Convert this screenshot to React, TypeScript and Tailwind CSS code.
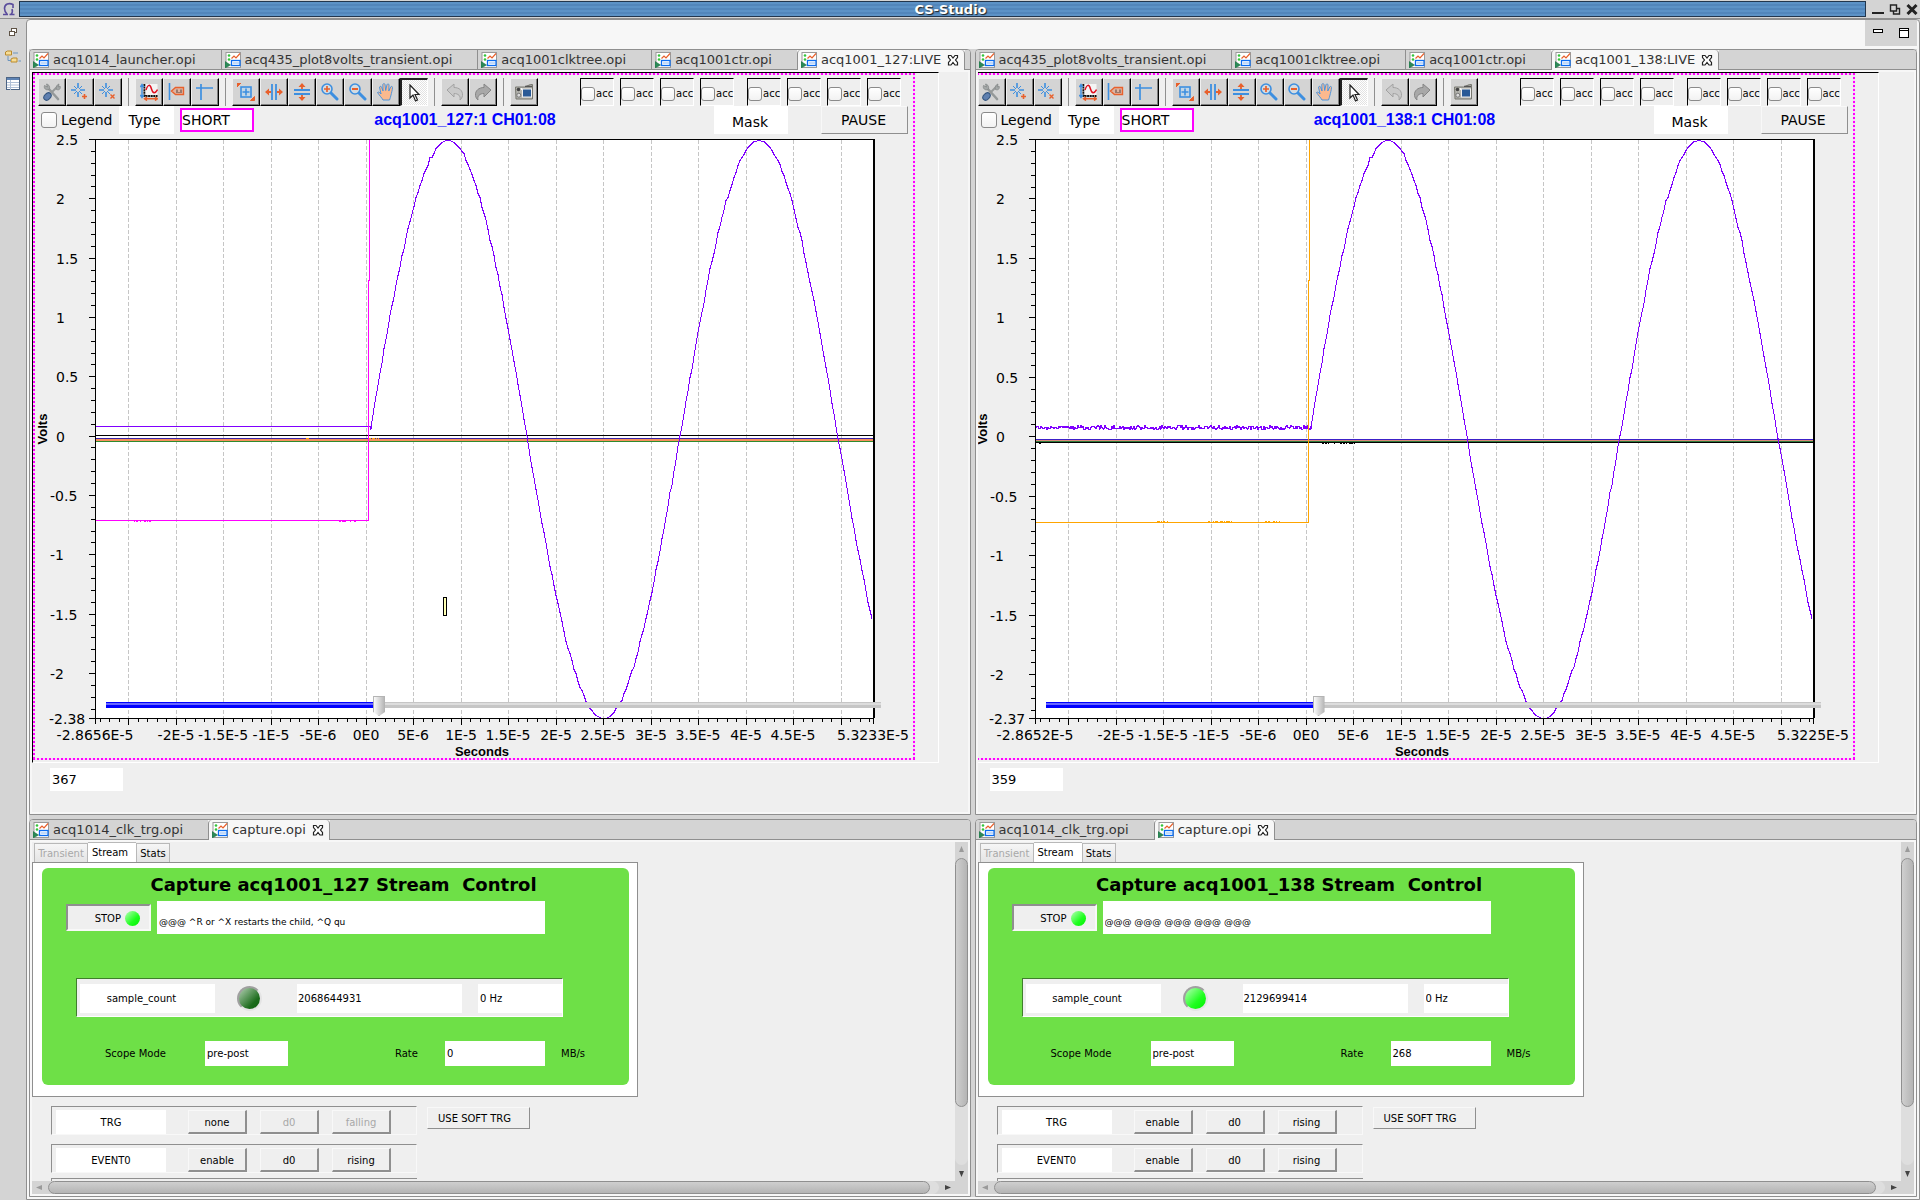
import React, { useState } from "react";

type Tab = { label: string; active?: boolean };

type Scope = {
  id: string;
  title: string;
  count: string;
  xMin: number;
  xMax: number;
  xMinLabel: string;
  xMaxLabel: string;
  yMin: number;
  stepColor: string;
  stepY: number;
  noisy: boolean;
};

type Trigger = { name: string; buttons: { label: string; off?: boolean }[] };

type Capture = {
  id: string;
  message: string;
  samples: string;
  running: boolean;
  rate: string;
  triggers: Trigger[];
};

const scopeLeft: Scope = {
  id: "acq1001_127",
  title: "acq1001_127:1 CH01:08",
  count: "367",
  xMin: -28.656,
  xMax: 53.233,
  xMinLabel: "-2.8656E-5",
  xMaxLabel: "5.3233E-5",
  yMin: -2.38,
  stepColor: "#ff00ff",
  stepY: 520,
  noisy: false,
};

const scopeRight: Scope = {
  id: "acq1001_138",
  title: "acq1001_138:1 CH01:08",
  count: "359",
  xMin: -28.652,
  xMax: 53.225,
  xMinLabel: "-2.8652E-5",
  xMaxLabel: "5.3225E-5",
  yMin: -2.37,
  stepColor: "#ffa500",
  stepY: 522,
  noisy: true,
};

const captureLeft: Capture = {
  id: "acq1001_127",
  message: "@@@ ^R or ^X restarts the child, ^Q qu",
  samples: "2068644931",
  running: false,
  rate: "0",
  triggers: [
    { name: "TRG", buttons: [{ label: "none" }, { label: "d0", off: true }, { label: "falling", off: true }] },
    { name: "EVENT0", buttons: [{ label: "enable" }, { label: "d0" }, { label: "rising" }] },
  ],
};

const captureRight: Capture = {
  id: "acq1001_138",
  message: "@@@ @@@ @@@ @@@ @@@",
  samples: "2129699414",
  running: true,
  rate: "268",
  triggers: [
    { name: "TRG", buttons: [{ label: "enable" }, { label: "d0" }, { label: "rising" }] },
    { name: "EVENT0", buttons: [{ label: "enable" }, { label: "d0" }, { label: "rising" }] },
  ],
};

/* ---------- icons ---------- */

const BLUE = "#3d8fe0";
const RED = "#e8602c";

const Star = () => (
  <g stroke={BLUE} fill="none">
    <path d="M7 0v5M7 9v5M0 7h5M9 7h5" strokeWidth="1.6" />
    <path d="M3 3l3 3M11 3L8 6M3 11l3-3M11 11L8 8" strokeWidth="1" />
  </g>
);

const Lens = () => (
  <>
    <path d="M9.5 9.5l6.5 6.5" stroke={BLUE} strokeWidth="3" strokeLinecap="round" />
    <circle cx="6" cy="6" r="5" fill="#d2dbe2" stroke={BLUE} strokeWidth="1.6" />
  </>
);

const icons: Record<string, React.ReactNode> = {
  settings: (
    <>
      <path d="M5 5l10 11" stroke="#959999" strokeWidth="2.6" strokeLinecap="round" />
      <path d="M1.5 2.5C.5 6 3.500 7.500 6 6.500 7.500 4 6 1.500 3.500 1L4.500 4z" fill="#a4a8a8" stroke="#858989" strokeWidth=".8" />
      <path d="M14 4L8 10" stroke="#959999" strokeWidth="2" />
      <path d="M17 3c1 3-1 4.500-3.500 3.500-1-2.500.5-5 2.500-5.500L15 4z" fill="#a4a8a8" stroke="#858989" strokeWidth=".8" />
      <ellipse cx="4.5" cy="13.5" rx="4.2" ry="3" transform="rotate(-45 4.5 13.5)" fill="#5f80b0" stroke="#34557f" />
    </>
  ),
  addMark: (
    <>
      <Star />
      <path d="M13.5 11v5M11 13.500h5" stroke={RED} strokeWidth="1.6" />
    </>
  ),
  delMark: (
    <>
      <Star />
      <path d="M11.5 11.500l4 4M15.500 11.500l-4 4" stroke={RED} strokeWidth="1.4" />
    </>
  ),
  autoscale: (
    <>
      <path d="M4.500 1v12h13" fill="none" stroke="#111" strokeWidth="2" strokeDasharray="2 .6" />
      <rect x="5.500" y="1" width="12" height="11" fill="#f4f4f4" />
      <path d="M6 7c2-6 4-6 5.500-1s3.500 5 6 .5" fill="none" stroke="#e01020" strokeWidth="1.5" />
      <path d="M2 2v12M.3 4L2 1.500 3.700 4M.3 12L2 14.500 3.700 12" fill="none" stroke={BLUE} strokeWidth="1.4" />
      <path d="M5 15.800h12M7 14l-2.500 1.800L7 17.600M15 14l2.500 1.800-2.500 1.800" fill="none" stroke={RED} strokeWidth="1.4" />
    </>
  ),
  annotate: (
    <>
      <path d="M1.500 0v17" stroke={BLUE} strokeWidth="1.6" />
      <path d="M3.500 8l4-3.500h8v7h-8z" fill="#dfb3a0" stroke={RED} strokeWidth="1.4" />
      <path d="M9 6.500v3.500M13 6.500v3.500M11 9v1" stroke="#6d5148" strokeWidth="1.2" />
    </>
  ),
  axis: <path d="M0 5h17M5 1v16" stroke={BLUE} strokeWidth="1.7" />,
  zoomArea: (
    <>
      <rect x="4" y="4" width="10" height="10" fill="#c3d6e6" stroke={BLUE} strokeWidth="1.6" />
      <path d="M9 5.500v7M5.500 9h7" stroke={BLUE} strokeWidth="1.6" />
      <path d="M0 0h4L0 4zM17.500 17.500h-4l4-4z" fill={RED} stroke={RED} />
    </>
  ),
  zoomX: (
    <>
      <path d="M7 1v16M11 1v16" stroke={BLUE} strokeWidth="1.8" />
      <path d="M6 9H2M12 9h4" stroke={RED} strokeWidth="1.8" />
      <path d="M4 5.500v7L0 9zM14 5.500v7L18 9z" fill={RED} />
    </>
  ),
  zoomY: (
    <>
      <path d="M1 7h16M1 11h16" stroke={BLUE} strokeWidth="1.8" />
      <path d="M9 6V2M9 12v4" stroke={RED} strokeWidth="1.8" />
      <path d="M5.500 4h7L9 0zM5.500 14h7L9 18z" fill={RED} />
    </>
  ),
  zoomIn: (
    <>
      <Lens />
      <path d="M6 3v6M3 6h6" stroke={RED} strokeWidth="1.7" />
    </>
  ),
  zoomOut: (
    <>
      <Lens />
      <path d="M3 6h6" stroke={RED} strokeWidth="1.8" />
    </>
  ),
  pan: (
    <path
      d="M6 17c-1-2-4-5-5.500-7.500 1-1 2.500 0 3.500 1.500L2.500 4c.6-1 1.800-.8 2.100.2L6 8 5.800 1.500c.5-1.200 1.900-1.200 2.200 0L8.700 7.500 10 1.600c.5-1 1.900-.8 2 .3L11.800 8l2-4.200c.8-.8 1.900-.3 1.700.8-.3 3-1 5.400-1.500 7.400-.3 1.500-.9 3.500-1.500 5z"
      fill="#fbb98e"
      stroke={BLUE}
      strokeWidth=".9"
    />
  ),
  pointer: <path d="M5 1v13l3-3 2.500 6 2-1L10 10.500h4z" fill="#fff" stroke="#222" strokeWidth="1.2" />,
  undo: (
    <path d="M1 7l7-6v3.500c5 0 9 3 8.500 8-.3 2-1.200 3.500-2.500 4.500.8-4-1.500-6.500-6-6.500V14z" fill="#c9c9c9" stroke="#a2a2a2" />
  ),
  redo: (
    <path d="M17 7l-7-6v3.500c-5 0-9 3-8.500 8 .3 2 1.200 3.500 2.500 4.500-.8-4 1.500-6.500 6-6.500V14z" fill="#a8a8a8" stroke="#858585" />
  ),
  camera: (
    <>
      <path d="M.5 4h9l6-2.500h2V16H1z" fill="#b4b4ae" stroke="#77776f" />
      <circle cx="3.500" cy="6.500" r="1.800" fill="#444" />
      <circle cx="6.500" cy="6" r="1" fill="#fff" />
      <circle cx="3.800" cy="12.200" r="2" fill="#dcdcdc" stroke="#777" />
      <rect x="7.500" y="6" width="9" height="8" fill="#2a5a96" stroke="#eee" />
      <path d="M10 3.500h7" stroke="#555" strokeWidth="1.5" />
    </>
  ),
};

const toolGroups = [
  ["settings", "addMark", "delMark"],
  ["autoscale", "annotate", "axis"],
  ["zoomArea", "zoomX", "zoomY", "zoomIn", "zoomOut", "pan", "pointer"],
  ["undo", "redo"],
  ["camera"],
];

function OpiIcon() {
  return (
    <svg viewBox="0 0 16 16" className="h-4 w-4 shrink-0" aria-hidden="true">
      <rect x="1" y=".5" width="14.5" height="15" fill="#fff" stroke="#9a9a9a" />
      <path d="M6.500 6.500L9 4l2 2 4-4.500" fill="none" stroke="#e8602c" strokeWidth="1.2" />
      <circle cx="4" cy="3.500" r="1.300" fill="#35c43a" />
      <circle cx="4" cy="7.500" r="1.300" fill="#35c43a" />
      <rect x="6.500" y="8.500" width="8.500" height="5" fill="#fff" stroke="#0a6cf0" strokeWidth="1.3" />
      <path d="M8.500 11h1M10.500 11h1M12.500 11h1" stroke="#0a6cf0" strokeWidth="1.2" />
      <path d="M0 9.500l5.500 3.500L0 16z" fill="#2b8a57" stroke="#226e45" strokeWidth=".6" />
    </svg>
  );
}

function CloseIcon() {
  return (
    <svg viewBox="0 0 12 12" className="h-3 w-3" aria-hidden="true">
      <path
        d="M1.500 1.500h2.500L6 4l2-2.500h2.500V3.500L8.500 6l2 2.500v2.500H8L6 8.500 4 11H1.500V8.500l2-2.500-2-2.500z"
        fill="#fff"
        stroke="#222"
        strokeWidth="1.2"
      />
    </svg>
  );
}

/* ---------- window frame ---------- */

function TitleBar() {
  return (
    <header className="flex h-[19px] items-center border-b border-[#8f8f8f] bg-[#d4d4d4]">
      <svg viewBox="0 0 19 18" className="h-[18px] w-[19px] shrink-0" aria-hidden="true">
        <path
          d="M13 8V4.500C9 2.500 4.500 4 4.500 8.500c0 2.500 1 4 2.500 5.500M3 14.500h5M9.500 14.500h5M12 9c.8 2 .3 4-1 5.500"
          fill="none"
          stroke="#5a4c9c"
          strokeWidth="1.6"
        />
      </svg>
      <div className="flex h-4 flex-1 items-center justify-center border border-[#22364d] bg-[repeating-linear-gradient(#5c92c6_0_2px,#5286bb_2px_4px)] pl-4">
        <h1 className="text-[13px] leading-none font-bold text-white [text-shadow:1px_1px_1px_#222]">CS-Studio</h1>
      </div>
      <div className="flex w-[54px] shrink-0 items-center justify-between pr-[2px] pl-[6px]">
        <button aria-label="Minimise window">
          <svg viewBox="0 0 12 12" className="h-3 w-3">
            <path d="M0 10h12" stroke="#222" strokeWidth="2" />
          </svg>
        </button>
        <button aria-label="Restore window">
          <svg viewBox="0 0 12 12" className="h-3 w-3">
            <path d="M4.500 5.500h6v5.500h-6z" fill="#d4d4d4" stroke="#222" strokeWidth="1.4" />
            <path d="M1.500 2h6v6h-6z" fill="#d4d4d4" stroke="#222" strokeWidth="1.4" />
          </svg>
        </button>
        <button aria-label="Close window">
          <svg viewBox="0 0 12 12" className="h-3 w-3">
            <path d="M1.500 2l9 9M10.500 2l-9 9" stroke="#222" strokeWidth="3" />
          </svg>
        </button>
      </div>
    </header>
  );
}

function SideRail() {
  return (
    <nav className="flex w-[26px] shrink-0 flex-col items-center gap-[13px] bg-[#d4d4d4] pt-2">
      <button aria-label="Restore">
        <svg viewBox="0 0 10 10" className="block h-[10px] w-[10px]" shapeRendering="crispEdges">
          <path d="M3.500 1.500h5v4h-5z" fill="#fff" stroke="#5e5346" />
          <path d="M1.500 4.500h5v4h-5z" fill="#fff" stroke="#5e5346" />
        </svg>
      </button>
      <button aria-label="Navigator">
        <svg viewBox="0 0 16 14" className="block h-[14px] w-4">
          <path d="M.5 2l2-1h4v4h-6zM6 9l2-1h4v4H6z" fill="#f7dd96" stroke="#b98a2c" />
          <path d="M3 6v4.500h3M8 3h5M13.500 11H16" fill="none" stroke="#6d95bd" />
        </svg>
      </button>
      <button aria-label="Properties">
        <svg viewBox="0 0 14 14" className="block h-[14px] w-[14px]">
          <rect x=".5" y=".5" width="13" height="12" fill="#fff" stroke="#4c6484" />
          <path d="M1 2h12" stroke="#5d83b4" strokeWidth="2" />
          <path d="M4.500 3v10M1 5.500h12M1 8h12M1 10.500h12" stroke="#aebfd6" />
        </svg>
      </button>
    </nav>
  );
}

function Panel({ tabs, children }: { tabs: Tab[]; children: React.ReactNode }) {
  return (
    <section className="flex min-h-0 min-w-0 flex-col overflow-hidden rounded-t-[4px] border border-[#8f8f8f] bg-[#f7f7f7]">
      <div role="tablist" className="flex h-5 shrink-0">
        {tabs.map((t, i) =>
          t.active ? (
            <div
              key={t.label}
              className="flex items-center gap-1 rounded-t-[4px] border-x border-[#8f8f8f] bg-[#f7f7f7] pr-[5px] pb-px pl-[3px] text-[13px] leading-none text-[#333]"
            >
              <OpiIcon />
              <button role="tab" aria-selected="true">
                {t.label}
              </button>
              <button aria-label={"Close " + t.label} className="ml-[2px]">
                <CloseIcon />
              </button>
            </div>
          ) : (
            <button
              key={t.label}
              role="tab"
              aria-selected="false"
              className={
                "flex items-center gap-1 border-b border-b-[#8f8f8f] bg-[#d4d4d4] pr-[25px] pl-[3px] text-[13px] leading-none text-[#333]" +
                (tabs[i + 1].active ? "" : " border-r border-r-[#8f8f8f]")
              }
            >
              <OpiIcon />
              {t.label}
            </button>
          )
        )}
        <div className="flex-1 border-b border-[#8f8f8f] bg-[#d4d4d4]" />
      </div>
      <div className="m-[2px] min-h-0 flex-1 overflow-hidden bg-[#efefef]">{children}</div>
    </section>
  );
}

/* ---------- scope ---------- */

const LEFT = 95;
const RIGHT = 873;
const TOP = 139;
const BOTTOM = 718;

// deterministic pseudo noise
const noise = (i: number) => {
  const n = Math.sin(i * 127.1) * 43758.5453;
  return n - Math.floor(n);
};

function sinePoints() {
  const pts = ["370,426", "371,429"];
  for (let x = 372; x <= 873; x += 2) {
    const y = 429 - 289 * Math.cos((2 * Math.PI * (x - 448)) / 311);
    const jitter = y > 150 && y < 710 ? noise(x) * 4 - 2 : 0;
    pts.push(`${x},${Math.round(y + jitter)}`);
  }
  return pts.join(" ");
}

function baseline(noisy: boolean) {
  if (!noisy) return "95,426 370,426";
  const pts: string[] = [];
  for (let x = 95; x <= 371; x++) {
    pts.push(`${x},${Math.round(425.2 + noise(x) * 4)}`);
  }
  return pts.join(" ");
}

function specks(from: number, to: number, y: number) {
  let d = "";
  for (let x = from; x < to; x++) {
    if (noise(x) > 0.5) d += `M${x} ${y}h1`;
  }
  return d;
}

function xLabel(v: number) {
  if (v === 0) return "0E0";
  return Math.abs(v) < 10 ? `${v}E-6` : `${v / 10}E-5`;
}

function Chart({ scope }: { scope: Scope }) {
  const px = (v: number) => Math.floor(LEFT + ((v - scope.xMin) / (scope.xMax - scope.xMin)) * (RIGHT - LEFT)) - 1;
  const py = (v: number) => Math.round(TOP + ((2.5 - v) / (2.5 - scope.yMin)) * (BOTTOM - TOP));

  const xMajor: number[] = [];
  for (let v = -25; v <= 50; v += 5) xMajor.push(v);
  const xMinor: number[] = [];
  for (let v = -28; v <= 53; v++) xMinor.push(v);
  const yMajor: number[] = [];
  for (let v = 2.5; v >= -2; v -= 0.5) yMajor.push(v);
  const yMinor: number[] = [];
  for (let i = 25; i >= -23; i--) yMinor.push(i / 10);

  return (
    <svg viewBox="35 134 878 624" className="block h-[624px] w-[878px]" role="img" aria-label={scope.title}>
      <rect x={LEFT} y={TOP} width={RIGHT - LEFT} height={BOTTOM - TOP} fill="#fff" />
      <g stroke="#c6c6c6" strokeDasharray="4 2" shapeRendering="crispEdges">
        {xMajor.map((v) => (
          <path key={v} d={`M${px(v) + 0.5} ${TOP + 1}V${BOTTOM}`} />
        ))}
      </g>
      <g fill="none" shapeRendering="crispEdges">
        {scope.noisy ? (
          <>
            <path d="M95 439.5H873" stroke="#3c20c8" />
            <path d="M95 440.5H873" stroke="#d88a78" />
            <path d="M95 441.5H873" stroke="#2e7a3c" />
            <path d="M95 442.5H873" stroke="#000" />
            <path d={specks(382, 416, 443.5) + specks(96, 102, 443.5)} stroke="#000" />
          </>
        ) : (
          <>
            <path d="M95 435.5H873" stroke="#000" />
            <path d="M95 438.5H873" stroke="#3a22a8" />
            <path d="M95 440H873" stroke="#f5905a" strokeWidth="2" />
            <path d="M95 441.5H873" stroke="#2e8b2e" />
            <path d={specks(368, 380, 438.5) + specks(306, 310, 438.5)} stroke="#ffa500" />
          </>
        )}
        <polyline points={baseline(scope.noisy)} stroke="#7f00ff" transform="translate(0 .5)" />
        <polyline points={sinePoints()} stroke="#7f00ff" transform="translate(0 .5)" />
        <path d={`M95 ${scope.stepY + 0.5}H368.5V280H369.5V140`} stroke={scope.stepColor} />
        <path
          d={
            scope.noisy
              ? specks(216, 230, 521.5) + specks(265, 292, 521.5) + specks(324, 340, 521.5)
              : specks(134, 151, 521.5) + specks(337, 356, 521.5)
          }
          stroke={scope.stepColor}
        />
      </g>
      <g shapeRendering="crispEdges" stroke="#000">
        <path d={`M${LEFT - 6} ${TOP + 0.5}H874`} />
        <path d={`M${LEFT + 0.5} ${TOP}V${BOTTOM + 6}`} />
        <path d={`M${LEFT - 6} ${BOTTOM + 0.5}H874`} />
        <path d={`M874 ${TOP}V${BOTTOM}`} strokeWidth="2" />
        <path d={`M873.5 ${BOTTOM}v6`} />
        {xMajor.map((v) => (
          <path key={v} d={`M${px(v) + 0.5} ${BOTTOM}v7`} />
        ))}
        {xMinor.map((v) => (
          <path key={v} d={`M${px(v) + 0.5} ${BOTTOM}v4`} />
        ))}
        {yMajor.map((v) => (
          <path key={v} d={`M${LEFT - 6} ${py(v) + 0.5}h6`} />
        ))}
        {yMinor.map((v) => (
          <path key={v} d={`M${LEFT - 4} ${py(v) + 0.5}h4`} />
        ))}
      </g>
      <g className="text-[14px]">
        {yMajor.map((v) => (
          <text key={v} x={v < 0 ? 50 : 56} y={py(v) + 6}>
            {String(v)}
          </text>
        ))}
        <text x={49} y={BOTTOM + 6}>
          {scope.yMin}
        </text>
        <g textAnchor="middle">
          <text x={LEFT} y={740}>
            {scope.xMinLabel}
          </text>
          {xMajor
            .filter((v) => v !== -25 && v !== 50)
            .map((v) => (
              <text key={v} x={px(v)} y={740}>
                {xLabel(v)}
              </text>
            ))}
          <text x={RIGHT} y={740}>
            {scope.xMaxLabel}
          </text>
        </g>
      </g>
      <g className="font-['Liberation_Sans',Arial,sans-serif] text-[13px] font-bold" textAnchor="middle">
        <text x={482} y={756}>
          Seconds
        </text>
        <text transform="translate(47 429) rotate(-90)">Volts</text>
      </g>
      {!scope.noisy && (
        <rect x="443.5" y="597.5" width="3" height="18" fill="#ffffb4" stroke="#000" shapeRendering="crispEdges" />
      )}
    </svg>
  );
}

function ToolButton({ name }: { name: string }) {
  const pressed = name === "pointer";
  return (
    <button
      aria-label={name}
      aria-pressed={pressed}
      className={
        "flex h-7 w-7 items-center justify-center pr-px " +
        (pressed
          ? "border-t-2 border-r border-b border-l-2 border-t-[#222] border-r-white border-b-white border-l-[#222] bg-[repeating-conic-gradient(#fff_0_25%,#e2e2e2_0_50%)] bg-[length:2px_2px]"
          : "border border-t-[#f0f0f0] border-r-black border-b-black border-l-[#f0f0f0] bg-[#d4d4d4] shadow-[inset_-1px_-1px_0_#7d7d7d]")
      }
    >
      <svg viewBox="0 0 18 18" className="h-[18px] w-[18px]" fill="none">
        {icons[name]}
      </svg>
    </button>
  );
}

function ChannelBox({ n }: { n: number }) {
  return (
    <label className="flex h-7 w-[34px] items-end border border-t-black border-r-white border-b-white border-l-black bg-[#efefef] pb-1 text-[10px]">
      <input
        type="checkbox"
        aria-label={"Channel " + n}
        className="h-[14px] w-[14px] shrink-0 appearance-none rounded-[3px] border border-[#8a8a8a] bg-[linear-gradient(#fff,#f2f2f2)] checked:bg-blue-500"
      />
      <span className="ml-px leading-[14px]">acc</span>
    </label>
  );
}

function ScopeView({ scope, shifted }: { scope: Scope; shifted?: boolean }) {
  const [level, setLevel] = useState(35);

  return (
    <div className={shifted ? "-ml-[6px]" : ""}>
      <div className="h-[691px] w-[907px] border border-t-black border-r-white border-b-white border-l-black">
        <div className="w-[882px] bg-[repeating-linear-gradient(90deg,#ff00ff_0_2px,#fbd0fb_2px_4px),repeating-linear-gradient(90deg,#ff00ff_0_2px,#fbd0fb_2px_4px),repeating-linear-gradient(#ff00ff_0_2px,#fbd0fb_2px_4px),repeating-linear-gradient(#ff00ff_0_2px,#fbd0fb_2px_4px)] bg-[length:100%_2px,100%_2px,2px_100%,2px_100%] bg-[position:top,bottom,left,right] bg-no-repeat p-[2px]">
          <div className="flex pt-[3px] pl-[3px]">
            {toolGroups.map((group, i) => (
              <React.Fragment key={i}>
                {i > 0 && (
                  <div className="flex w-[13px] justify-center">
                    <div className="w-px bg-[#8f8f8f]" />
                  </div>
                )}
                {group.map((name) => (
                  <ToolButton key={name} name={name} />
                ))}
              </React.Fragment>
            ))}
            <div className="mr-3 ml-auto flex gap-[13px]">
              {[0, 4].map((base) => (
                <div key={base} className="flex gap-[6px]">
                  {[1, 2, 3, 4].map((n) => (
                    <ChannelBox key={n} n={base + n} />
                  ))}
                </div>
              ))}
            </div>
          </div>
          <div className="flex h-7 items-center pr-[5px] pl-[6px] text-[14px]">
            <label className="flex w-[78px] items-center gap-1">
              <input
                type="checkbox"
                className="h-4 w-4 appearance-none rounded-[3px] border border-[#8a8a8a] bg-[linear-gradient(#fff,#f2f2f2)] checked:bg-blue-500"
              />
              Legend
            </label>
            <label htmlFor={scope.id + "-type"} className="flex h-7 w-[55px] items-center justify-center bg-white pr-1">
              Type
            </label>
            <input
              id={scope.id + "-type"}
              defaultValue="SHORT"
              className="ml-[6px] h-6 w-[74px] border-2 border-[#ff00ff] bg-white"
            />
            <h2 className="flex-1 pr-[38px] text-center font-['Liberation_Sans',Arial,sans-serif] text-[16px] font-bold text-[#0000ff]">
              {scope.title}
            </h2>
            <div className="flex h-7 w-[74px] items-center justify-center self-end bg-white pt-1 pr-[2px]">Mask</div>
            <button className="ml-[33px] h-7 w-[87px] border border-t-[#f8f8f8] border-r-[#8f8f8f] border-b-[#8f8f8f] border-l-[#f8f8f8] bg-[#efefef] pr-[2px]">
              PAUSE
            </button>
          </div>
          <div className="relative">
            <Chart scope={scope} />
            <input
              type="range"
              aria-label="Trigger position"
              min={0}
              max={100}
              value={level}
              onChange={(e) => setLevel(Number(e.target.value))}
              style={{ "--level": `${level}%` } as React.CSSProperties}
              className="absolute top-[561px] left-[71px] h-5 w-[775px] appearance-none bg-transparent [&::-webkit-slider-runnable-track]:h-[6px] [&::-webkit-slider-runnable-track]:bg-[linear-gradient(transparent_0_1px,#ffffff66_1px_3px,transparent_3px),linear-gradient(to_right,#0000ff_var(--level),#c6c6c6_var(--level))] [&::-webkit-slider-thumb]:-mt-[6px] [&::-webkit-slider-thumb]:h-5 [&::-webkit-slider-thumb]:w-3 [&::-webkit-slider-thumb]:appearance-none [&::-webkit-slider-thumb]:border [&::-webkit-slider-thumb]:border-[#b4b4b4] [&::-webkit-slider-thumb]:bg-[linear-gradient(to_right,#fafafa,#b8b8b8)] [&::-webkit-slider-thumb]:[clip-path:polygon(0_0,100%_0,100%_80%,50%_100%,0_80%)]"
            />
          </div>
        </div>
      </div>
      <input
        aria-label="Update count"
        readOnly
        value={scope.count}
        className="mt-[5px] ml-[18px] block h-[23px] w-[73px] bg-white pl-[2px] text-[13px]"
      />
    </div>
  );
}

/* ---------- capture ---------- */

function Led({ on, size }: { on: boolean; size: "sm" | "lg" }) {
  return (
    <span
      className={
        "block shrink-0 rounded-full " +
        (size === "lg"
          ? "h-[25px] w-[25px] border-2 border-t-[#a0a0a0] border-r-[#e4e4e4] border-b-[#e4e4e4] border-l-[#a0a0a0] "
          : "h-[15px] w-[15px] ") +
        (on
          ? "bg-[linear-gradient(135deg,#b8ffb8,#1fff1f_60%,#00f000)]"
          : "bg-[linear-gradient(135deg,#b4d0b4,#1c6c1c_70%,#0f5f0f)]")
      }
    />
  );
}

function VScroll() {
  return (
    <div className="flex flex-col items-center bg-[#d4d4d4]" aria-hidden="true">
      <svg viewBox="0 0 13 16" className="h-4 w-[13px]">
        <path d="M6.500 4L9 10H4z" fill="#9a9a9a" />
      </svg>
      <div className="w-[13px] flex-1 rounded-full bg-[#dedede]">
        <div className="h-[81%] rounded-full border border-[#8f8f8f] bg-[linear-gradient(to_right,#cfcfcf,#b4b4b4)]" />
      </div>
      <svg viewBox="0 0 13 16" className="h-4 w-[13px]">
        <path d="M6.500 12L9 6H4z" fill="#444" />
      </svg>
    </div>
  );
}

function HScroll() {
  return (
    <div className="flex items-center bg-[#d4d4d4]" aria-hidden="true">
      <svg viewBox="0 0 16 13" className="h-[13px] w-4">
        <path d="M4 6.500L10 4v5z" fill="#9a9a9a" />
      </svg>
      <div className="h-[13px] flex-1 rounded-full bg-[#dedede]">
        <div className="h-full w-[99%] rounded-full border border-[#8f8f8f] bg-[linear-gradient(#cfcfcf,#b4b4b4)]" />
      </div>
      <svg viewBox="0 0 16 13" className="h-[13px] w-4">
        <path d="M12 6.500L6 4v5z" fill="#444" />
      </svg>
    </div>
  );
}

function TriggerRow({ trigger }: { trigger: Trigger }) {
  return (
    <div className="flex h-[29px] w-[366px] items-end border border-t-[#8f8f8f] border-r-[#f8f8f8] border-b-[#f8f8f8] border-l-[#8f8f8f] pl-1">
      <div className="flex h-6 w-[110px] items-center justify-center bg-white pt-px">{trigger.name}</div>
      <div className="ml-[22px] flex gap-[13px]">
        {trigger.buttons.map((b) => (
          <button
            key={b.label}
            disabled={b.off}
            className="h-6 w-[59px] border-t border-r-2 border-b-2 border-l border-t-[#f8f8f8] border-r-[#8f8f8f] border-b-[#8f8f8f] border-l-[#f8f8f8] pt-[2px] disabled:text-[#a8a8a8]"
          >
            {b.label}
          </button>
        ))}
      </div>
    </div>
  );
}

function CaptureView({ data }: { data: Capture }) {
  return (
    <div className="grid h-full grid-cols-[minmax(0,1fr)_13px] grid-rows-[minmax(0,1fr)_13px] text-[10px]">
      <div className="overflow-hidden">
        <div role="tablist" className="flex h-5 items-end pl-[2px]">
          <button
            role="tab"
            aria-selected="false"
            disabled
            className="h-[19px] w-[54px] border border-b-0 border-[#b8b8b8] bg-[linear-gradient(#f6f6f6,#e4e4e4)] text-[#a8a8a8]"
          >
            Transient
          </button>
          <button role="tab" aria-selected="true" className="h-5 w-12 border-t border-[#b8b8b8] bg-white pr-1">
            Stream
          </button>
          <button
            role="tab"
            aria-selected="false"
            className="h-[19px] w-[34px] border border-b-0 border-[#b8b8b8] bg-[linear-gradient(#f6f6f6,#e4e4e4)]"
          >
            Stats
          </button>
        </div>
        <div className="w-[606px] border border-[#8f8f8f] bg-white pt-[5px] pr-2 pb-[11px] pl-[9px]">
          <div className="rounded-[6px] bg-[#6ee047] pb-[19px]">
            <h2 className="h-[33px] pl-4 text-center text-[18px] leading-[33px] font-bold whitespace-pre">
              {`Capture ${data.id} Stream  Control`}
            </h2>
            <div className="flex items-center pl-[24px]">
              <button className="flex h-[27px] w-[85px] items-center justify-end gap-1 border-2 border-t-[#8f8f8f] border-r-[#f8f8f8] border-b-[#f8f8f8] border-l-[#8f8f8f] bg-[#efefef] pt-px pr-[9px]">
                <span className="pt-px">STOP</span>
                <Led on size="sm" />
              </button>
              <input
                aria-label="Console message"
                readOnly
                value={data.message}
                className="ml-[6px] h-[33px] w-[388px] bg-white pt-[9px] pl-[2px] text-[9px]"
              />
            </div>
            <div className="mt-11 ml-[34px] flex h-[39px] w-[487px] items-center border border-t-[#3f7f2c] border-r-white border-b-white border-l-[#3f7f2c] bg-[#efefef] pt-[2px] pl-[3px]">
              <label
                htmlFor={data.id + "-samples"}
                className="flex h-[29px] w-[135px] items-center justify-center bg-white pr-3"
              >
                sample_count
              </label>
              <div className="ml-[22px]">
                <Led on={data.running} size="lg" />
              </div>
              <input
                id={data.id + "-samples"}
                readOnly
                value={data.samples}
                className="ml-[35px] h-[29px] w-[165px] bg-white pl-px"
              />
              <input aria-label="Sample rate" readOnly value="0 Hz" className="ml-4 h-[29px] w-[84px] bg-white pl-[2px]" />
            </div>
            <div className="mt-6 flex h-[25px] items-center pl-[63px]">
              <label htmlFor={data.id + "-mode"} className="w-[100px]">
                Scope Mode
              </label>
              <input id={data.id + "-mode"} defaultValue="pre-post" className="h-[25px] w-[83px] bg-white pl-[2px]" />
              <label htmlFor={data.id + "-rate"} className="ml-[107px] w-[50px]">
                Rate
              </label>
              <input id={data.id + "-rate"} readOnly value={data.rate} className="h-[25px] w-[100px] bg-white pl-[2px]" />
              <span className="ml-4">MB/s</span>
            </div>
          </div>
        </div>
        <div className="mt-[9px] flex items-start gap-[10px] pl-[19px]">
          <div className="flex flex-col gap-[9px]">
            {data.triggers.map((t) => (
              <TriggerRow key={t.name} trigger={t} />
            ))}
            <div className="-mt-1 h-[29px] border-t border-l border-[#8f8f8f]" />
          </div>
          <button className="mt-px h-[22px] w-[103px] border border-t-[#f8f8f8] border-r-[#8f8f8f] border-b-[#8f8f8f] border-l-[#f8f8f8] pr-2">
            USE SOFT TRG
          </button>
        </div>
      </div>
      <VScroll />
      <HScroll />
      <div className="bg-[#d4d4d4]" />
    </div>
  );
}

export default function App() {
  return (
    <div className="flex h-screen flex-col bg-[#d4d4d4] font-['DejaVu_Sans',Verdana,sans-serif] text-black">
      <TitleBar />
      <div className="flex min-h-0 flex-1">
        <SideRail />
        <main className="flex min-h-0 min-w-0 flex-1 flex-col rounded-t-[4px] border border-[#8f8f8f] bg-[#f7f7f7] px-[2px] pb-[2px]">
          <div className="flex h-[29px] shrink-0 justify-end">
            <div className="flex h-[26px] w-[52px] items-center justify-between bg-[#d4d4d4] px-2">
              <button aria-label="Minimise editors">
                <svg viewBox="0 0 10 10" className="h-[10px] w-[10px]">
                  <rect x=".5" y="1.5" width="9" height="3" fill="#fff" stroke="#000" shapeRendering="crispEdges" />
                </svg>
              </button>
              <button aria-label="Maximise editors">
                <svg viewBox="0 0 10 10" className="h-[10px] w-[10px]" shapeRendering="crispEdges">
                  <rect x=".5" y=".5" width="9" height="9" fill="#fff" stroke="#000" />
                  <path d="M0 2.500h10" stroke="#000" />
                </svg>
              </button>
            </div>
          </div>
          <div className="grid min-h-0 flex-1 grid-cols-[minmax(0,942fr)_minmax(0,943fr)] grid-rows-[minmax(0,766fr)_minmax(0,378fr)] gap-1 bg-[#d4d4d4]">
            <Panel
              tabs={[
                { label: "acq1014_launcher.opi" },
                { label: "acq435_plot8volts_transient.opi" },
                { label: "acq1001clktree.opi" },
                { label: "acq1001ctr.opi" },
                { label: "acq1001_127:LIVE", active: true },
              ]}
            >
              <ScopeView scope={scopeLeft} />
            </Panel>
            <Panel
              tabs={[
                { label: "acq435_plot8volts_transient.opi" },
                { label: "acq1001clktree.opi" },
                { label: "acq1001ctr.opi" },
                { label: "acq1001_138:LIVE", active: true },
              ]}
            >
              <ScopeView scope={scopeRight} shifted />
            </Panel>
            <Panel tabs={[{ label: "acq1014_clk_trg.opi" }, { label: "capture.opi", active: true }]}>
              <CaptureView data={captureLeft} />
            </Panel>
            <Panel tabs={[{ label: "acq1014_clk_trg.opi" }, { label: "capture.opi", active: true }]}>
              <CaptureView data={captureRight} />
            </Panel>
          </div>
        </main>
      </div>
    </div>
  );
}
